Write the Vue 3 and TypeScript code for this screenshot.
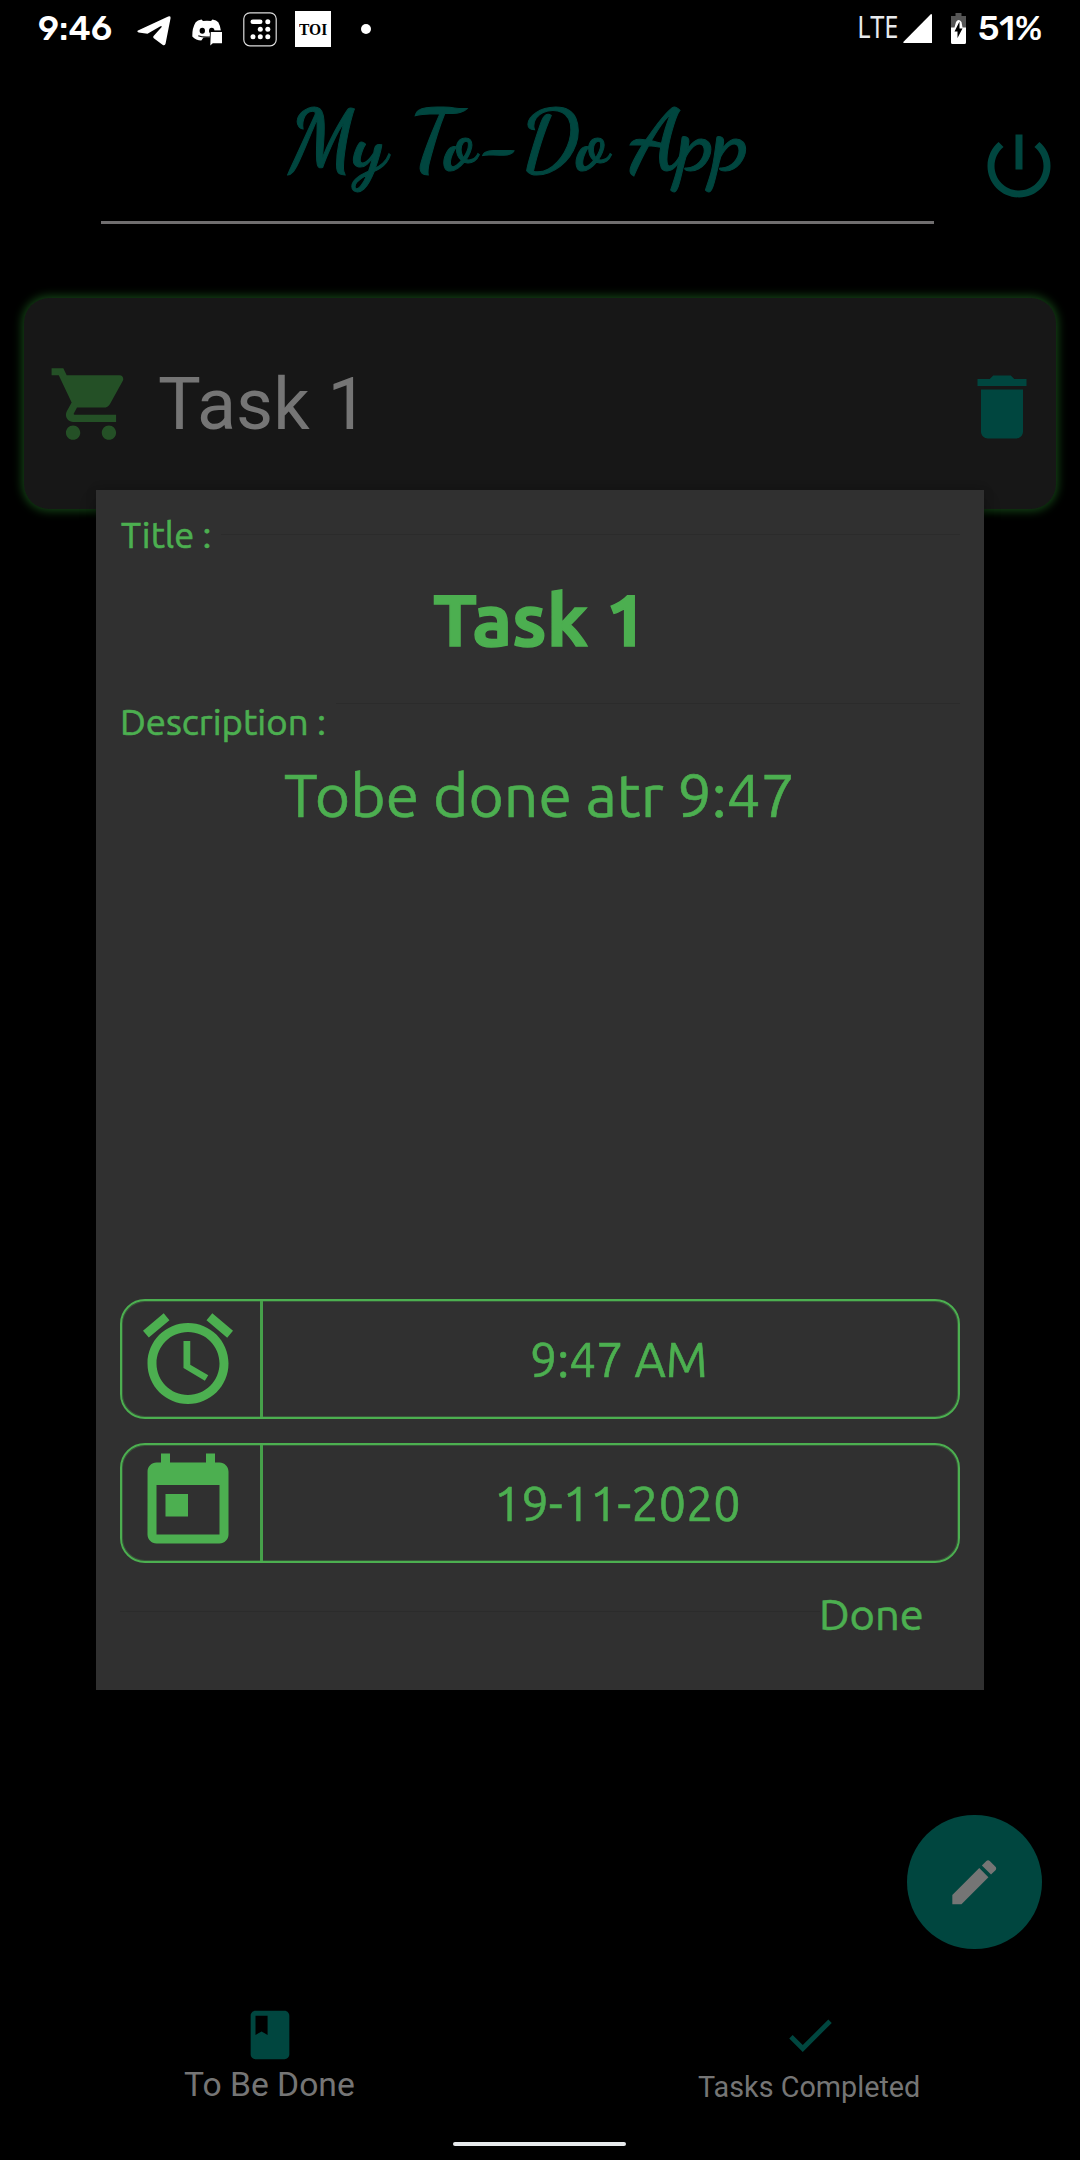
<script setup lang="ts">
import type { Directive } from 'vue'

// Stretches a single line horizontally so that its ink fills exactly the given width.
const vFit: Directive<HTMLElement, number> = {
  mounted(el, { value }) {
    const inner = document.createElement('span')
    const text = (el.textContent ?? '').trim()
    const cs = getComputedStyle(el)
    const ctx = document.createElement('canvas').getContext('2d')
    if (!ctx) return
    ctx.font = `${cs.fontStyle} ${cs.fontWeight} ${cs.fontSize} ${cs.fontFamily}`
    const m = ctx.measureText(text)
    const scale = value / (m.actualBoundingBoxLeft + m.actualBoundingBoxRight)
    inner.textContent = text
    inner.style.display = 'inline-block'
    inner.style.transformOrigin = '0 0'
    inner.style.transform = `translateX(${m.actualBoundingBoxLeft * scale}px) scaleX(${scale})`
    el.style.width = `${value}px`
    el.replaceChildren(inner)
  },
}

const paths = {
  power:
    'M13 3h-2v10h2V3zm4.83 2.17l-1.42 1.42C17.99 7.86 19 9.81 19 12c0 3.87-3.13 7-7 7s-7-3.13-7-7c0-2.19 1.01-4.14 2.58-5.42L6.17 5.17C4.23 6.82 3 9.26 3 12c0 4.97 4.03 9 9 9s9-4.03 9-9c0-2.74-1.23-5.18-3.17-6.83z',
  cart:
    'M7 18c-1.1 0-1.99.9-1.99 2S5.9 22 7 22s2-.9 2-2-.9-2-2-2zM1 2v2h2l3.6 7.59-1.35 2.45c-.16.28-.25.61-.25.96 0 1.1.9 2 2 2h12v-2H7.42c-.14 0-.25-.11-.25-.25l.03-.12.9-1.63h7.45c.75 0 1.41-.41 1.75-1.03l3.58-6.49c.08-.14.12-.31.12-.48 0-.55-.45-1-1-1H5.21l-.94-2H1zm16 16c-1.1 0-1.99.9-1.99 2s.89 2 1.99 2 2-.9 2-2-.9-2-2-2z',
  trash: 'M6 19c0 1.1.9 2 2 2h8c1.1 0 2-.9 2-2V7H6v12zM19 4h-3.5l-1-1h-5l-1 1H5v2h14V4z',
  alarm:
    'M22 5.72l-4.6-3.86-1.29 1.53 4.6 3.86L22 5.72zM7.88 3.39L6.6 1.86 2 5.71l1.29 1.53 4.59-3.85zM12.5 8H11v6l4.75 2.85.75-1.23-4-2.37V8zM12 4c-4.97 0-9 4.03-9 9s4.02 9 9 9c4.97 0 9-4.03 9-9s-4.03-9-9-9zm0 16c-3.87 0-7-3.13-7-7s3.13-7 7-7 7 3.13 7 7-3.13 7-7 7z',
  today:
    'M19 3h-1V1h-2v2H8V1H6v2H5c-1.11 0-1.99.9-1.99 2L3 19c0 1.1.89 2 2 2h14c1.1 0 2-.9 2-2V5c0-1.1-.9-2-2-2zm0 16H5V8h14v11zM7 10h5v5H7z',
  edit:
    'M3 17.25V21h3.75L17.81 9.94l-3.75-3.75L3 17.25zM20.71 7.04c.39-.39.39-1.02 0-1.41l-2.34-2.34c-.39-.39-1.02-.39-1.41 0l-1.83 1.83 3.75 3.75 1.83-1.83z',
  book:
    'M18 2H6c-1.1 0-2 .9-2 2v16c0 1.1.9 2 2 2h12c1.1 0 2-.9 2-2V4c0-1.1-.9-2-2-2zM6 4h5v8l-2.5-1.5L6 12V4z',
  check: 'M9 16.17L4.83 12l-1.42 1.41L9 19 21 7l-1.41-1.41z',
}

const title: string = 'Task 1'
const rows = [
  { icon: paths.alarm, text: '9:47 AM', width: 173 },
  { icon: paths.today, text: '19-11-2020', width: 239 },
]
</script>

<template>
  <div class="screen">
    <div class="status">
      <span v-fit="72" class="clock">9:46</span>
      <svg class="s-telegram" width="34" height="30" viewBox="0 0 34 30">
        <path d="M1.5 14.2 31.2 .6Q34-.4 33.500 2.600L28.600 27.500Q28 30.300 25.500 28.800L16.800 22.200Q15.500 21 16.800 19.700L24.500 11.200Q25.300 9.300 23 10.400L10.500 17.800 1.600 16.400Q-1 15.300 1.500 14.200Z" fill="#fff" />
      </svg>
      <svg class="s-discord" width="31" height="27" viewBox="0 0 31 27">
        <path d="M9.500 .5 11 2Q15 1.300 19 2L20.500 .5Q24.500 1 26.300 3.200Q28.500 7 28.900 11.800H19.200V18.600H11.500L9.300 21.500Q4 21.300.3 17.500Q0 9 3.700 3.200Q5.500 1.200 9.500 .5Z" fill="#fff" />
        <path d="M6.300 16.800Q10 18.600 18.500 18" stroke="#000" stroke-width="1.200" fill="none" />
        <ellipse cx="10.300" cy="11.700" rx="2.700" ry="3" />
        <ellipse cx="19.700" cy="11.700" rx="2.700" ry="3" />
        <path d="M18 11.500H31V25H20.500L17.500 27.500Z" fill="#000" />
        <path d="M18.800 13H30V24.300H20.800L18.300 26.600Z" fill="#fff" />
      </svg>
      <svg class="s-calc" width="34" height="35" viewBox="0 0 34 35">
        <rect x=".8" y=".8" width="32.400" height="33" rx="6" fill="none" stroke="#ddd" stroke-width="1.200" />
        <g fill="#fff">
          <rect x="7.500" y="7.500" width="12" height="4.600" rx="2.300" />
          <circle cx="24.800" cy="9.800" r="2.500" />
          <circle cx="17.300" cy="17.300" r="2.500" /><circle cx="24.800" cy="17.300" r="2.500" />
          <circle cx="10" cy="24.800" r="2.500" /><circle cx="17.300" cy="24.800" r="2.500" /><circle cx="24.800" cy="24.800" r="2.500" />
        </g>
      </svg>
      <span class="toi"><span v-fit="28">TOI</span></span>
      <i class="dot"></i>
      <span v-fit="38" class="lte">LTE</span>
      <svg class="s-signal" width="29" height="29" viewBox="0 0 29 29"><path d="M28 0Q29 0 29 1V29H1Q0 29 .3 28Z" fill="#fff" /></svg>
      <svg class="s-battery" width="15" height="31" viewBox="0 0 15 31">
        <path d="M4.500 0H10.500V3H15V17H0V3H4.500Z" fill="#555" />
        <path d="M0 14.500H3.500L5 9Q7.500 5 10.500 9L11.500 14.500H15V29.500Q15 31 13.500 31H1.500Q0 31 0 29.500Z" fill="#fff" />
        <path d="M8.500 8.500 3.500 18.500H6.500V25L11.500 15.500H8.500Z" fill="#000" />
      </svg>
      <span v-fit="62" class="pct">51%</span>
    </div>

    <header class="header">
      <div class="brand"><h1 v-fit="459">My To-Do App</h1></div>
      <svg class="power" width="84" height="84" viewBox="0 0 24 24"><path :d="paths.power" /></svg>
    </header>

    <section class="card">
      <svg class="cart" width="86" height="86" viewBox="0 0 24 24"><path :d="paths.cart" /></svg>
      <span v-fit="194" class="card-title">{{ title }}</span>
      <svg class="trash" width="84" height="84" viewBox="0 0 24 24"><path :d="paths.trash" /></svg>
    </section>

    <nav class="tabs">
      <div class="tab">
        <svg width="58" height="58" viewBox="0 0 24 24"><path :d="paths.book" /></svg>
        <span v-fit="170" class="tab-main">To Be Done</span>
      </div>
      <div class="tab">
        <svg width="58" height="58" viewBox="0 0 24 24"><path :d="paths.check" /></svg>
        <span v-fit="221" class="tab-alt">Tasks Completed</span>
      </div>
    </nav>
    <div class="home"></div>

    <button class="fab"><svg width="58.500" height="58.500" viewBox="0 0 24 24"><path :d="paths.edit" /></svg></button>

    <div class="dialog">
      <div class="legend first"><span v-fit="88.500">Title :</span><i></i></div>
      <div class="name"><span v-fit="201">{{ title }}</span></div>
      <div class="legend second"><span v-fit="201">Description :</span><i></i></div>
      <div class="desc"><span v-fit="506">Tobe done atr 9:47</span></div>
      <div v-for="row in rows" :key="row.text" class="row">
        <div class="row-icon"><svg width="108" height="108" viewBox="0 0 24 24"><path :d="row.icon" /></svg></div>
        <div class="row-text"><span v-fit="row.width">{{ row.text }}</span></div>
      </div>
      <div class="actions"><i></i><span v-fit="100">Done</span></div>
    </div>
  </div>
</template>

<style>
body {
  margin: 0;
  background: #000;
}
</style>

<style scoped>
.screen {
  position: relative;
  display: flex;
  flex-direction: column;
  width: 1080px;
  height: 2160px;
  overflow: hidden;
  background: #000;
  font-family: Roboto, sans-serif;
}
.screen * {
  box-sizing: border-box;
}
.screen span,
h1 {
  flex: none;
  white-space: nowrap;
  text-align: left;
}
svg {
  display: block;
  flex: none;
}
.status {
  display: flex;
  align-items: flex-start;
  height: 60px;
  padding-left: 39px;
  color: #fff;
}
.clock,
.pct {
  margin-top: 8px;
  font: 500 33.500px/42px 'Google Sans', 'Product Sans', Rubik, Figtree, Outfit, Lato, sans-serif;
}
.s-telegram {
  margin: 16px 0 0 26px;
}
.s-discord {
  margin: 19px 0 0 21px;
}
.s-calc {
  margin: 12px 0 0 20px;
}
.toi {
  display: flex;
  justify-content: center;
  width: 36px;
  height: 36px;
  margin: 11px 0 0 18px;
  background: #fff;
  color: #000;
  font: 700 16px/37px 'Liberation Serif', serif;
}
.dot {
  width: 10px;
  height: 10px;
  margin: 24px 488px 0 30px;
  border-radius: 50%;
  background: #fff;
}
.lte {
  margin-top: 6px;
  color: #e8eaed;
  font: 400 30px/42px 'Noto Sans', sans-serif;
}
.s-signal {
  margin: 14px 0 0 6px;
}
.s-battery {
  margin: 13px 13px 0 19px;
}
.header {
  display: flex;
  height: 238px;
  padding-left: 100.500px;
}
.brand {
  display: flex;
  width: 833.500px;
  height: 164px;
  padding: 21px 0 0 186px;
  border-bottom: 3px solid #706e6f;
}
h1 {
  margin: 0;
  color: #00463f;
  font: 700 85px/120px 'Dancing Script', 'Liberation Serif', serif;
  -webkit-text-stroke: 1px #00463f;
}
.power {
  margin: 63.500px 0 0 42.700px;
  fill: #00463f;
}
.card {
  display: flex;
  width: 1032px;
  height: 211px;
  margin-left: 24px;
  padding-left: 24px;
  border-radius: 25px;
  background: #171717;
  box-shadow: 0 0 10px 2px #154717;
}
.cart {
  margin-top: 63px;
  fill: #245026;
}
.card-title {
  margin: 56px 606.500px 0 25px;
  color: #757575;
  font-size: 73px;
  line-height: 100px;
}
.trash {
  margin-top: 66.500px;
  fill: #00463f;
}
.tabs {
  display: flex;
  height: 136px;
  margin-top: 1497px;
}
.tab {
  display: flex;
  flex-direction: column;
  align-items: center;
  width: 540px;
  color: #757575;
}
.tab svg {
  fill: #00463f;
}
.tab-main {
  margin-right: 3px;
  font-size: 33.500px;
  line-height: 41px;
}
.tab-alt {
  margin: 2px 3px 0 0;
  font-size: 29px;
  line-height: 42px;
}
.home {
  width: 173px;
  height: 4px;
  margin-left: 453px;
  border-radius: 2px;
  background: #e8eaed;
}
.fab {
  position: absolute;
  left: 907px;
  top: 1814.500px;
  display: flex;
  align-items: center;
  justify-content: center;
  width: 134.500px;
  height: 134.500px;
  padding: 0;
  border: 0;
  border-radius: 50%;
  background: #00463f;
}
.fab svg {
  fill: #757575;
}
.dialog {
  position: absolute;
  left: 96px;
  top: 490px;
  width: 888px;
  height: 1200px;
  padding: 0 24px;
  background: #303030;
  color: #4caf50;
  font-family: Ubuntu, 'Noto Sans', sans-serif;
  font-weight: 400;
  -webkit-text-stroke: 0.6px #4caf50;
  box-shadow: 0 11px 15px rgba(0, 0, 0, 0.3), 0 0 10px rgba(0, 0, 0, 0.15);
}
.dialog i {
  flex: 1;
  height: 1px;
  background: #2b2b2b;
}
.legend {
  display: flex;
  font-size: 36px;
  line-height: 48px;
}
.first {
  height: 81px;
  padding: 20.500px 0 0 .5px;
}
.first i {
  margin: 23.500px 0 0 12px;
}
.second {
  height: 60px;
  padding: 8px 0 0 2.500px;
}
.second i {
  margin: 5px 0 0 12px;
}
.name {
  height: 119px;
  padding: .5px 0 0 314px;
  font-size: 72px;
  font-weight: 700;
  line-height: 96px;
  -webkit-text-stroke: 1.4px #4caf50;
}
.desc {
  height: 549px;
  padding: 4px 0 0 165px;
  font-size: 60px;
  line-height: 82px;
}
.name span,
.desc span {
  display: block;
}
.row {
  display: flex;
  height: 120px;
  margin-bottom: 24px;
  border: 2px solid #4caf50;
  border-radius: 25px;
  box-shadow: inset 0 0 0 1px rgba(76, 175, 80, 0.3);
}
.row-icon {
  width: 141px;
  padding: 4px 0 0 11.500px;
  border-right: 3px solid #46a04a;
}
.row-icon svg {
  fill: #4caf50;
}
.row-text {
  display: flex;
  flex: 1;
  justify-content: center;
  padding-left: 15.500px;
  font-size: 49px;
  line-height: 116px;
}
.actions {
  display: flex;
  padding-right: 38px;
  font-size: 43px;
  line-height: 58px;
}
.actions i {
  margin: 24px 2px 0 0;
}
.actions span {
  margin-top: -2.500px;
}
</style>
